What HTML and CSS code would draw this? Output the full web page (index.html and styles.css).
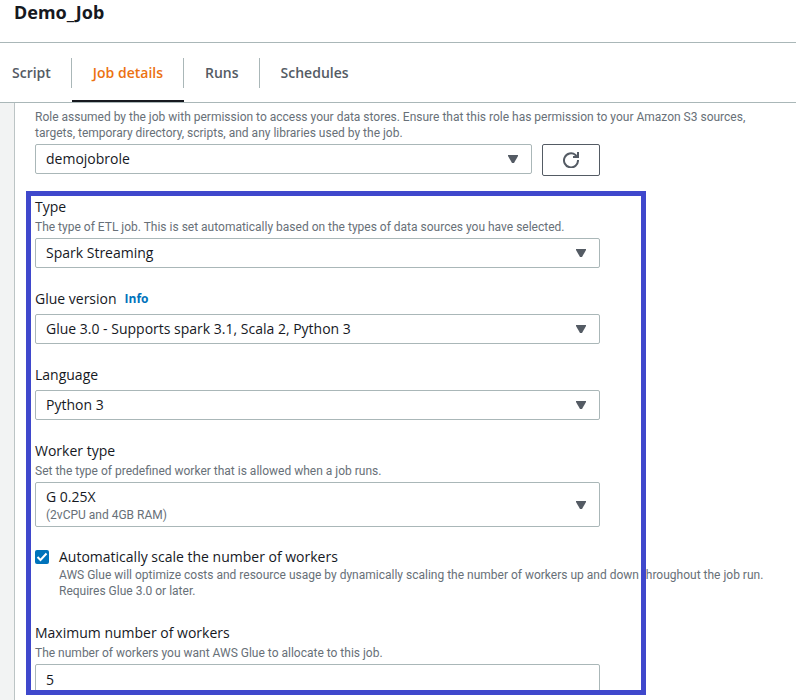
FILE: index.html
```html
<!DOCTYPE html>
<html lang="en">
<head>
<meta charset="utf-8">
<title>Demo_Job</title>
<link rel="stylesheet" href="styles.css">
</head>
<body>
<header class="page-header"><h1>Demo_Job</h1></header>
<nav class="tabs">
  <a class="tab" href="#script"><span>Script</span></a>
  <a class="tab active" href="#details" aria-current="page"><span>Job details</span></a>
  <a class="tab" href="#runs"><span>Runs</span></a>
  <a class="tab" href="#schedules"><span>Schedules</span></a>
</nav>
<main class="content">
  <form class="panel">
    <div class="role">
      <p class="hint" id="role-hint">Role assumed by the job with permission to access your data stores. Ensure that this role has permission to your Amazon S3 sources, targets, temporary directory, scripts, and any libraries used by the job.</p>
      <div class="role-row">
        <div class="select-box">
          <select aria-label="IAM role" aria-describedby="role-hint"><option>demojobrole</option></select>
          <svg class="caret" viewBox="0 0 10 8" aria-hidden="true"><path d="M0 0H10V1L6 8H4L0 1Z"/></svg>
        </div>
        <button class="refresh" type="button" aria-label="Refresh">
          <svg viewBox="0 0 16 16" aria-hidden="true"><path d="M15 8A7 7 0 1 1 12.5 3L14 5M15 0V5H10"/></svg>
        </button>
      </div>
    </div>
    <div class="highlight">
      <div class="field">
        <label for="type">Type</label>
        <p class="hint">The type of ETL job. This is set automatically based on the types of data sources you have selected.</p>
        <div class="select-box">
          <select id="type"><option>Spark Streaming</option></select>
          <svg class="caret" viewBox="0 0 10 8" aria-hidden="true"><path d="M0 0H10V1L6 8H4L0 1Z"/></svg>
        </div>
      </div>
      <div class="field">
        <div class="label-row"><label for="version">Glue version</label><a class="info" href="#info">Info</a></div>
        <div class="select-box">
          <select id="version"><option>Glue 3.0 - Supports spark 3.1, Scala 2, Python 3</option></select>
          <svg class="caret" viewBox="0 0 10 8" aria-hidden="true"><path d="M0 0H10V1L6 8H4L0 1Z"/></svg>
        </div>
      </div>
      <div class="field">
        <label for="language">Language</label>
        <div class="select-box">
          <select id="language"><option>Python 3</option></select>
          <svg class="caret" viewBox="0 0 10 8" aria-hidden="true"><path d="M0 0H10V1L6 8H4L0 1Z"/></svg>
        </div>
      </div>
      <div class="field">
        <label for="worker">Worker type</label>
        <p class="hint">Set the type of predefined worker that is allowed when a job runs.</p>
        <div class="select-box tall">
          <select id="worker" aria-describedby="worker-size"><option>G 0.25X</option></select>
          <span class="hint option-detail" id="worker-size">(2vCPU and 4GB RAM)</span>
          <svg class="caret" viewBox="0 0 10 8" aria-hidden="true"><path d="M0 0H10V1L6 8H4L0 1Z"/></svg>
        </div>
      </div>
      <div class="check">
        <input type="checkbox" id="autoscale" checked>
        <svg class="tick" viewBox="0 0 14 14" aria-hidden="true"><path d="M2.5 7L5.5 10L11.5 3.5"/></svg>
        <div>
          <label for="autoscale">Automatically scale the number of workers</label>
          <p class="hint">AWS Glue will optimize costs and resource usage by dynamically scaling the number of workers up and down throughout the job run. Requires Glue 3.0 or later.</p>
        </div>
      </div>
      <div class="field">
        <label for="max">Maximum number of workers</label>
        <p class="hint">The number of workers you want AWS Glue to allocate to this job.</p>
        <input class="text" id="max" type="text" value="5">
      </div>
    </div>
  </form>
</main>
</body>
</html>
```
FILE: styles.css
```css
*, *::after { box-sizing: border-box; }
body {
  margin: 0;
  height: 100vh;
  display: flex;
  flex-direction: column;
  overflow: hidden;
  background: #fff;
  color: #16191f;
  font: 14px/20px "Open Sans", "Noto Sans", sans-serif;
}
h1, p { margin: 0; }
.page-header {
  padding: 0 14px 18px;
  border-bottom: 1px solid #aab7b8;
}
h1 { font-size: 18px; line-height: 24px; font-weight: 700; font-family: "Noto Sans", sans-serif; }
.tabs {
  display: flex;
  border-bottom: 1px solid #aab7b8;
}
.tab {
  display: flex;
  padding: 15px 0 12px;
  border-bottom: 2px solid transparent;
  color: #545b64;
  font-size: 14px;
  font-weight: 600;
  line-height: 30px;
  text-decoration: none;
}
.tab span { padding: 0 20px 0 21px; border-right: 1px solid #aab7b8; }
.tab:first-child span { padding-left: 12px; }
.tab:last-child span { border-right: 0; }
.tab.active { color: #ec7211; border-bottom-color: #16191f; }
.content {
  flex: 1;
  min-height: 0;
  display: flex;
  padding-left: 14px;
  background: #f2f3f3;
}
.panel {
  flex: 1;
  min-width: 0;
  display: flex;
  flex-direction: column;
  border-left: 1px solid #bcc4c5;
  background: #fff;
}
.role { padding: 6px 20px 0; }
.hint { color: #687078; font: 12px/16px Roboto, sans-serif; }
.role-row {
  display: flex;
  align-items: flex-start;
  gap: 10px;
  max-width: 565px;
}
.role-row .select-box { flex: 1; }
.select-box { position: relative; margin-top: 3px; }
select, .text {
  display: block;
  width: 100%;
  height: 30px;
  padding: 0 10px;
  appearance: none;
  border: 1px solid #aab7b8;
  border-radius: 2px;
  background: #fff;
  color: #16191f;
  font: inherit;
}
.caret {
  position: absolute;
  top: 50%;
  right: 14px;
  width: 10px;
  height: 8px;
  margin-top: -4px;
  fill: #545b64;
  pointer-events: none;
}
.tall select { height: 45px; padding-bottom: 15px; }
.option-detail { position: absolute; left: 11px; bottom: 4px; pointer-events: none; }
.refresh {
  width: 58px;
  height: 32px;
  margin-top: 3px;
  padding: 0;
  display: grid;
  place-items: center;
  border: 1px solid #545b64;
  border-radius: 2px;
  background: #fff;
}
.refresh svg { width: 16px; height: 16px; fill: none; stroke: #545b64; stroke-width: 2; }
.highlight {
  flex: 1;
  min-height: 0;
  position: relative;
  margin: 15px 0 5px 11px;
  padding: 6px 0 0 9px;
  overflow: hidden;
}
.highlight::after {
  content: "";
  position: absolute;
  inset: 0;
  max-width: 620px;
  border: 5px solid #3f48cc;
  pointer-events: none;
}
.field {
  display: flex;
  flex-direction: column;
  max-width: 565px;
  margin-bottom: 21px;
}
label { display: block; margin-bottom: 2px; }
.label-row { display: flex; gap: 8px; }
.info { color: #0073bb; font-size: 12px; font-weight: 700; text-decoration: none; }
.text { margin-top: 3px; }
.check {
  position: relative;
  display: flex;
  gap: 10px;
  margin: -1px 0 24px;
}
.check label { margin-bottom: 0; }
.check input {
  flex: none;
  appearance: none;
  width: 14px;
  height: 14px;
  margin: 3px 0 0;
  border-radius: 2px;
  background: #0073bb;
}
.tick {
  position: absolute;
  top: 3px;
  left: 0;
  width: 14px;
  height: 14px;
  fill: none;
  stroke: #fff;
  stroke-width: 2;
  pointer-events: none;
}
```
